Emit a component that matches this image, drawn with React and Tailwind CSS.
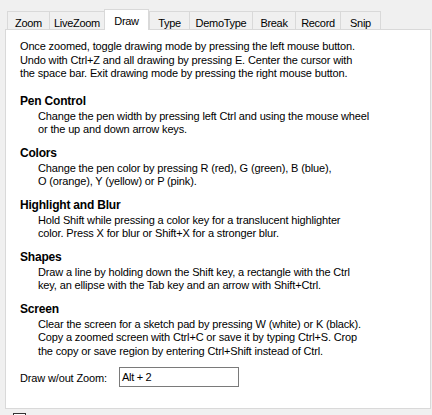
import React from "react";

const tabs = [
  { label: "Zoom", w: "w-[42px]" },
  { label: "LiveZoom", w: "w-[55px]" },
  { label: "Draw", w: "w-[45px]", active: true },
  { label: "Type", w: "w-[40px]" },
  { label: "DemoType", w: "w-[63px]" },
  { label: "Break", w: "w-[43px]" },
  { label: "Record", w: "w-[45px]" },
  { label: "Snip", w: "w-[41px]", last: true },
];

const sections = [
  {
    title: "Pen Control",
    lines: [
      "Change the pen width by pressing left Ctrl and using the mouse wheel",
      "or the up and down arrow keys.",
    ],
  },
  {
    title: "Colors",
    lines: [
      "Change the pen color by pressing R (red), G (green), B (blue),",
      "O (orange), Y (yellow) or P (pink).",
    ],
  },
  {
    title: "Highlight and Blur",
    lines: [
      "Hold Shift while pressing a color key for a translucent highlighter",
      "color. Press X for blur or Shift+X for a stronger blur.",
    ],
  },
  {
    title: "Shapes",
    lines: [
      "Draw a line by holding down the Shift key, a rectangle with the Ctrl",
      "key, an ellipse with the Tab key and an arrow with Shift+Ctrl.",
    ],
  },
  {
    title: "Screen",
    lines: [
      "Clear the screen for a sketch pad by pressing W (white) or K (black).",
      "Copy a zoomed screen with Ctrl+C or save it by typing Ctrl+S. Crop",
      "the copy or save region by entering Ctrl+Shift instead of Ctrl.",
    ],
  },
];

function Lines({ lines }) {
  return (
    <div className="text-[11px] leading-[13.5px] tracking-[-0.15px] whitespace-nowrap">
      {lines.map((l, i) => (
        <div key={i}>{l}</div>
      ))}
    </div>
  );
}

export default function App() {
  return (
    <div
      className="w-[432px] h-[415px] bg-[#f0f0f0] overflow-hidden text-black"
      style={{ fontFamily: '"Liberation Sans", Arial, sans-serif' }}
    >
      <div className="flex items-end pl-[7px] pt-[9px]">
        {tabs.map((t) =>
          t.active ? (
            <div
              key={t.label}
              className={`${t.w} h-[21px] -mb-px relative z-10 bg-white border-l border-r border-t border-[#d9d9d9] flex justify-center pt-[5px] text-[11px] leading-[13px] tracking-[-0.3px]`}
            >
              {t.label}
            </div>
          ) : (
            <div
              key={t.label}
              className={`${t.w} h-[18px] border-t border-l ${t.last ? "border-r" : ""} border-[#d9d9d9] flex justify-center pt-[5px] text-[11px] leading-[13px] tracking-[-0.3px]`}
            >
              {t.label}
            </div>
          )
        )}
      </div>
      <div className="ml-[5px] w-[426px] h-[380px] bg-white border border-[#d9d9d9] pl-[14px] pt-[10px]">
        <Lines
          lines={[
            "Once zoomed, toggle drawing mode by pressing the left mouse button.",
            "Undo with Ctrl+Z and all drawing by pressing E. Center the cursor with",
            "the space bar. Exit drawing mode by pressing the right mouse button.",
          ]}
        />
        <div className="mt-[13px] flex flex-col gap-[9px]">
          {sections.map((s) => (
            <div key={s.title}>
              <div className="text-[12px] leading-[14px] font-bold tracking-[-0.2px]">
                {s.title}
              </div>
              <div className="mt-[2px] ml-[18px]">
                <Lines lines={s.lines} />
              </div>
            </div>
          ))}
        </div>
        <div className="mt-[9px] flex items-start">
          <div className="w-[99px] pt-[5px] text-[11px] leading-[13.5px] tracking-[-0.15px] whitespace-nowrap">
            Draw w/out Zoom:
          </div>
          <div className="w-[120px] h-[20px] border border-[#7a7a7a] bg-white pl-[2px] pt-[3px] text-[11px] leading-[13.5px] tracking-[-0.3px]">
            Alt + 2
          </div>
        </div>
      </div>
      <div className="mt-[4px] ml-[13px] w-[13px] h-[13px] border border-[#333333] bg-white" />
    </div>
  );
}
